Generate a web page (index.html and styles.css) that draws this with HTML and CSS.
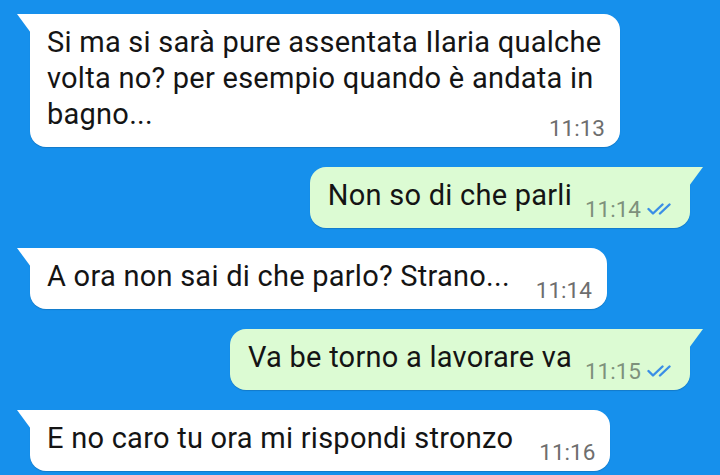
FILE: index.html
```html
<!DOCTYPE html>
<html lang="it">
<head>
    <meta charset="UTF-8">
    <meta name="viewport" content="width=device-width, initial-scale=1.0">
    <title>Chat</title>
    <link rel="stylesheet" href="styles.css">
</head>
<body>

    <div class="chat">

        <!-- messaggio ricevuto -->
        <div class="bubble in wide">
            Si ma si sarà pure assentata Ilaria qualche volta no? per esempio quando è andata in bagno...<span class="meta"><span class="time">11:13</span></span>
        </div>

        <!-- messaggio inviato -->
        <div class="bubble out">
            Non so di che parli<span class="meta"><span class="time">11:14</span><svg class="ticks" viewBox="0 0 26 12"><path d="M1.5 6 L6 10.5 L15.5 1.5 M13 10.5 L22.5 1.5"/></svg></span>
        </div>

        <div class="bubble in">
            A ora non sai di che parlo? Strano...<span class="meta"><span class="time">11:14</span></span>
        </div>

        <div class="bubble out">
            Va be torno a lavorare va<span class="meta"><span class="time">11:15</span><svg class="ticks" viewBox="0 0 26 12"><path d="M1.5 6 L6 10.5 L15.5 1.5 M13 10.5 L22.5 1.5"/></svg></span>
        </div>

        <div class="bubble in">
            E no caro tu ora mi rispondi stronzo<span class="meta"><span class="time">11:16</span></span>
        </div>

    </div>

</body>
</html>
```

FILE: styles.css
```css
/* base */
body, html {
    margin: 0;
    padding: 0;
    height: 100%;
    background-color: #1690ec;
    font-family: Roboto, "Noto Sans", "Liberation Sans", sans-serif;
    color: #141414;
}
.chat {
    display: flex;
    flex-direction: column;
    gap: 20px;
    padding: 14px 17px 0;
}
/* bubbles */
.bubble {
    position: relative;
    display: flow-root;
    font-size: 29px;
    letter-spacing: 0.25px;
    line-height: 36px;
    padding: 10px 15px 15px 17px;
    border-radius: 16px;
    box-shadow: 0 1px 1px rgba(0, 0, 0, 0.15);
}
.bubble.in {
    align-self: flex-start;
    margin-left: 13px;
    background-color: #fff;
    border-top-left-radius: 0;
}
.bubble.out {
    align-self: flex-end;
    margin-right: 13px;
    background-color: #dcfbd3;
    border-top-right-radius: 0;
    padding-left: 18px;
    padding-right: 17px;
}
.bubble.wide {
    width: 558px;
}
/* codina */
.bubble::before {
    content: "";
    position: absolute;
    top: 0;
    width: 14px;
    height: 19px;
    background: inherit;
}
.bubble.in::before {
    left: -13px;
    clip-path: polygon(0 0, 100% 0, 100% 100%);
}
.bubble.out::before {
    right: -13px;
    clip-path: polygon(0 0, 100% 0, 0 100%);
}
/* ora + spunte */
.meta {
    float: right;
    display: flex;
    align-items: center;
    height: 24px;
    line-height: 24px;
    font-size: 22.5px;
    letter-spacing: 0;
    margin-top: 20px;
    margin-bottom: -20px;
}
.in .meta {
    margin-left: 26px;
    color: #6e6e6e;
}
.out .meta {
    margin-left: 13px;
    color: #7e917c;
}
.ticks {
    width: 26px;
    height: 12px;
    margin-left: 6px;
    fill: none;
    stroke: #3a8ee6;
    stroke-width: 2.4;
    stroke-linecap: round;
    stroke-linejoin: round;
}
```
